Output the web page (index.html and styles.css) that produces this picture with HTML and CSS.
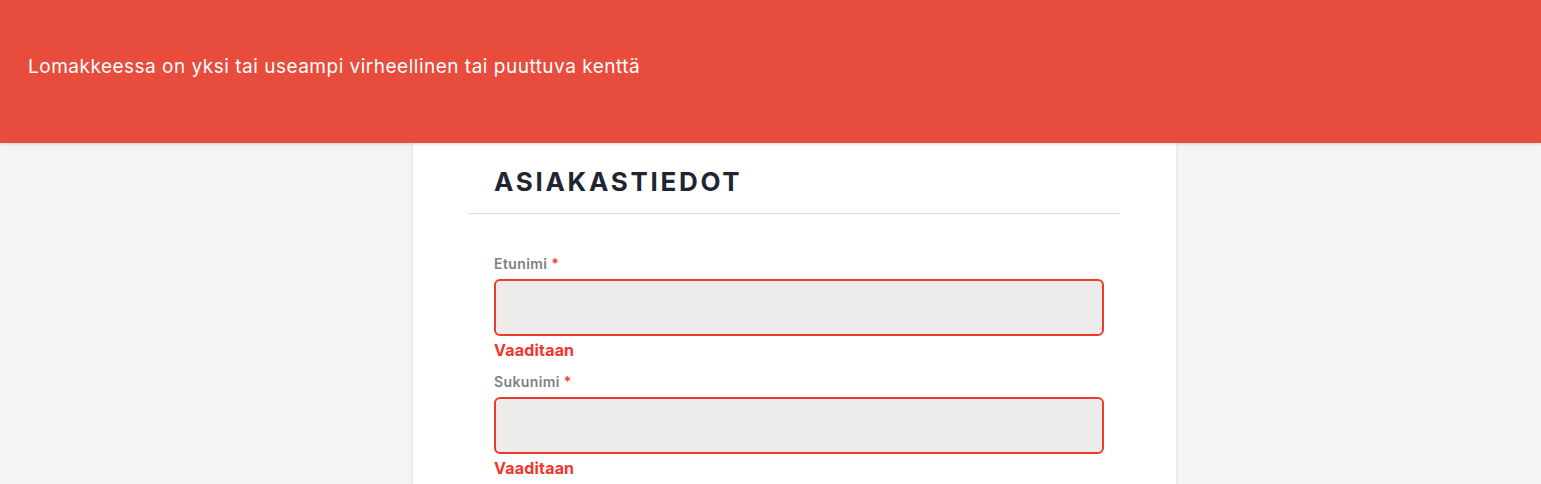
FILE: index.html
```html
<!DOCTYPE html>
<html lang="fi">
<head>
<meta charset="utf-8">
<title>Asiakastiedot</title>
<link rel="stylesheet" href="styles.css">
</head>
<body>
<div class="alert">Lomakkeessa on yksi tai useampi virheellinen tai puuttuva kenttä</div>
<main class="page">
  <section class="card">
    <h2 class="card-title">ASIAKASTIEDOT</h2>
    <hr class="divider">
    <form class="fields">
      <div class="field">
        <label class="field-label">Etunimi <span class="req">*</span></label>
        <input class="field-input" type="text">
        <div class="field-error">Vaaditaan</div>
      </div>
      <div class="field">
        <label class="field-label">Sukunimi <span class="req">*</span></label>
        <input class="field-input" type="text">
        <div class="field-error">Vaaditaan</div>
      </div>
    </form>
  </section>
</main>
</body>
</html>
```
FILE: styles.css
```css
* { box-sizing: border-box; }
html, body { margin: 0; padding: 0; }
body {
  background: #f3f4f6;
  font-family: Inter, "Liberation Sans", Arial, sans-serif;
  height: 484px;
  overflow: hidden;
}
.alert {
  position: relative;
  z-index: 2;
  height: 143px;
  background: #e74c3c;
  color: #ffffff;
  font-size: 19px;
  letter-spacing: 0.5px;
  line-height: 22px;
  padding: 56px 28px 0;
  box-shadow: 0 1px 3px rgba(0,0,0,0.15);
}
.page {
  padding-left: 413px;
}
.card {
  width: 763px;
  min-height: 400px;
  background: #ffffff;
  box-shadow: 0 0 3px rgba(0,0,0,0.12);
  padding: 23px 56px 0;
}
.card-title {
  margin: 0;
  padding-left: 25px;
  font-size: 26px;
  font-weight: 700;
  letter-spacing: 2.7px;
  color: #1f2633;
  line-height: 32px;
}
.divider {
  border: 0;
  border-top: 1px solid #dddddd;
  margin: 15px 0 0;
}
.fields {
  padding: 40px 16px 0 25px;
}
.field {
  display: flex;
  flex-direction: column;
  margin-bottom: 12px;
}
.field-label {
  font-size: 14px;
  font-weight: 600;
  letter-spacing: 0.4px;
  color: #808080;
  line-height: 20px;
  margin-bottom: 5px;
}
.req { color: #f0392b; }
.field-input {
  height: 57px;
  border: 2px solid #f0392b;
  border-radius: 6px;
  background: #eeecea;
  outline: none;
}
.field-error {
  font-size: 16px;
  font-weight: 700;
  letter-spacing: 0.2px;
  color: #f3352a;
  line-height: 20px;
  margin-top: 4px;
}
```
